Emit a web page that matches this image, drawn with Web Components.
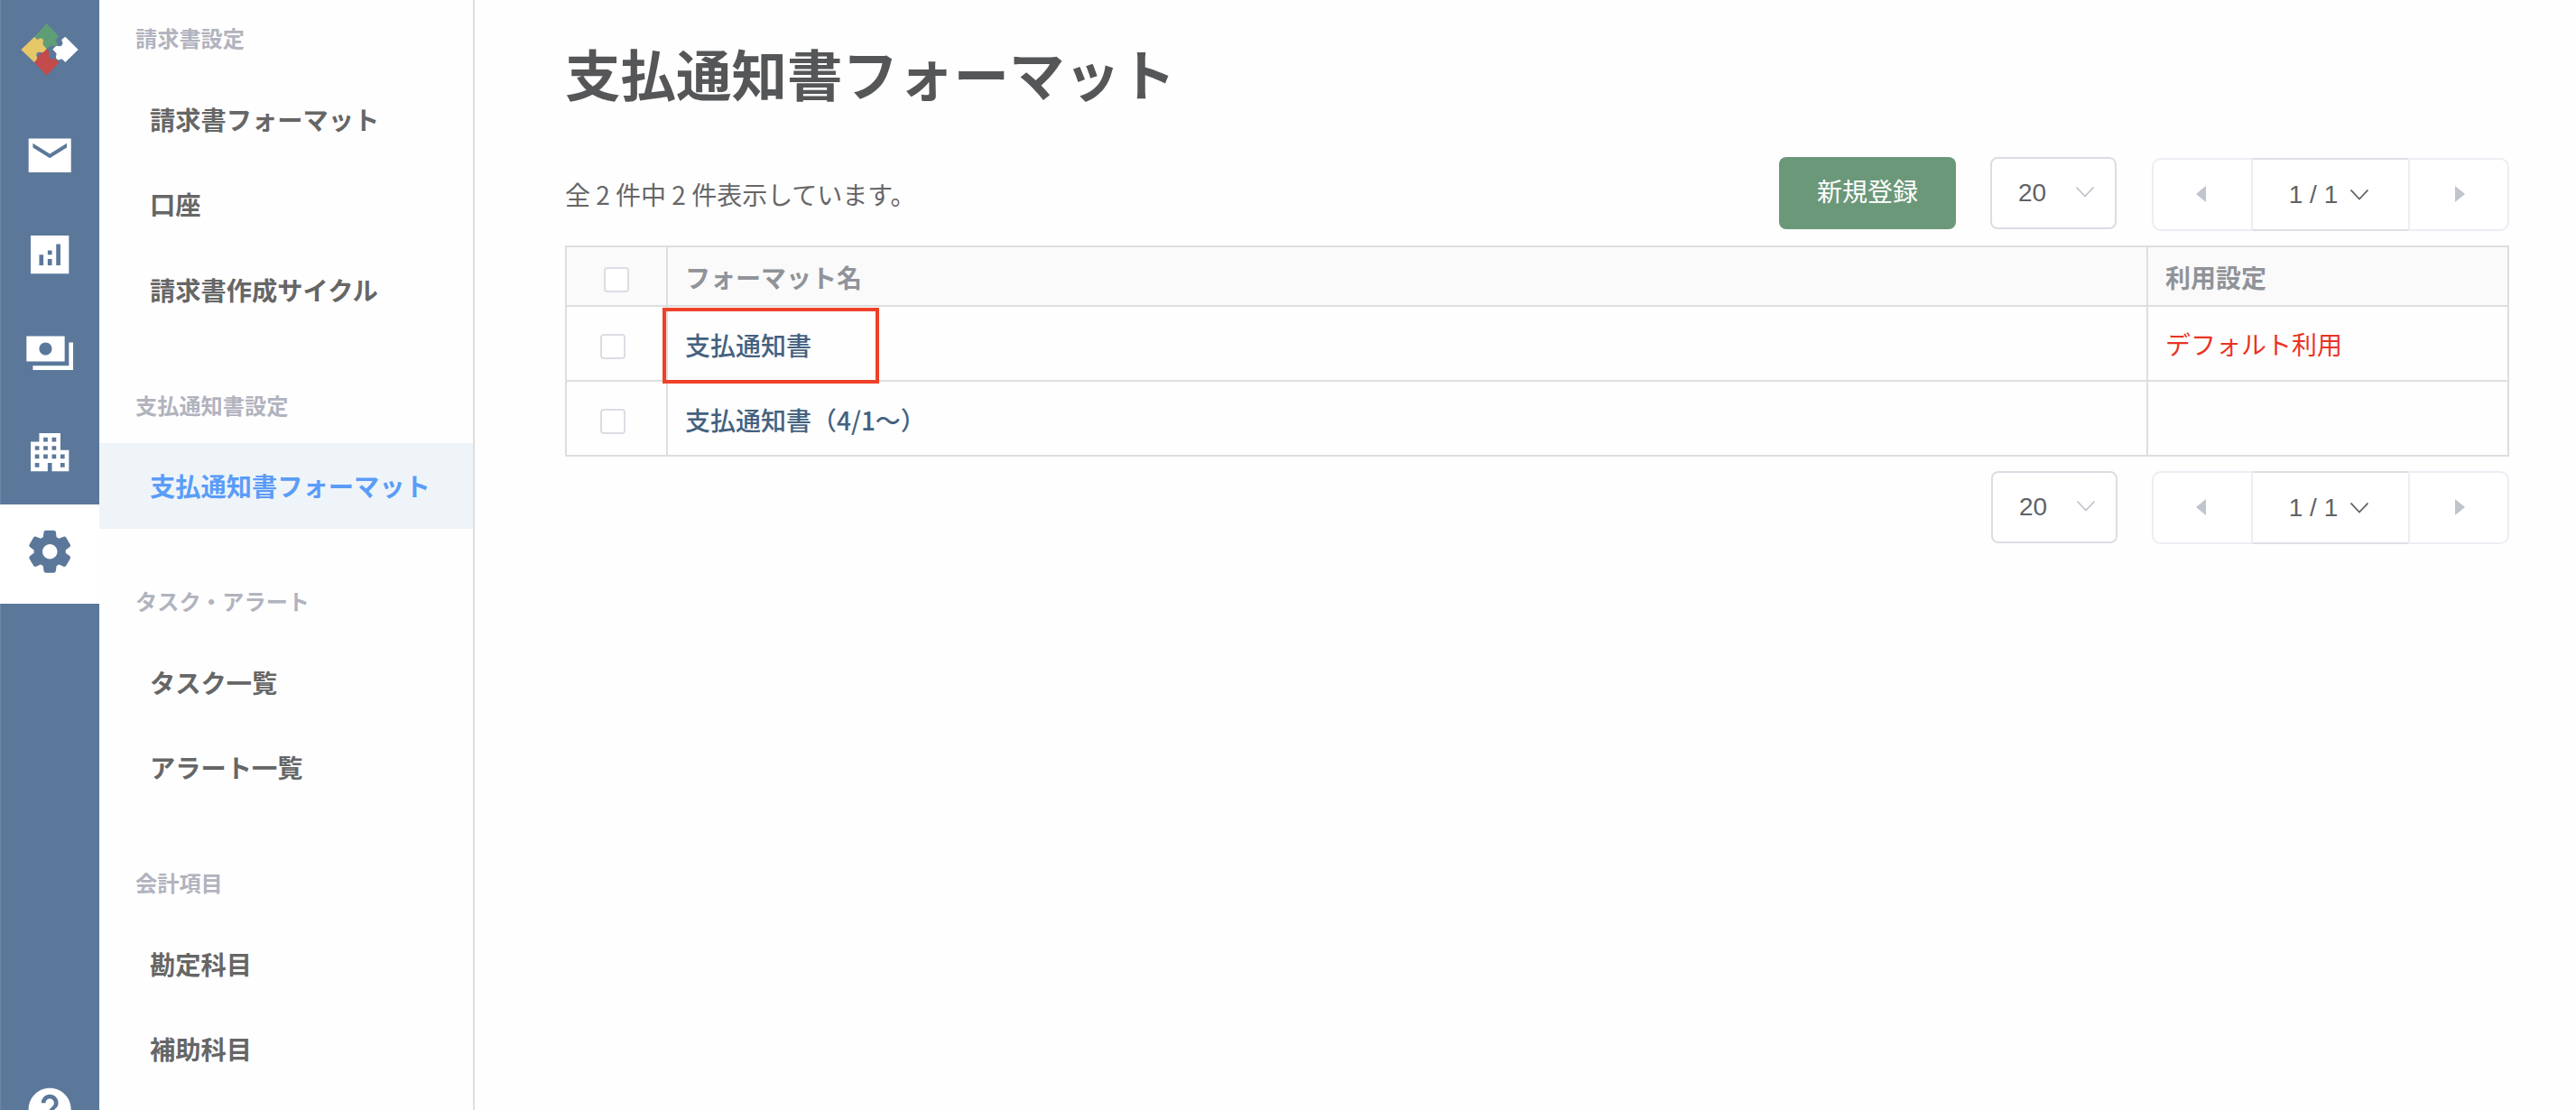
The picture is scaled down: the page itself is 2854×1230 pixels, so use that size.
<!DOCTYPE html>
<html lang="ja">
<head>
<meta charset="utf-8">
<title>支払通知書フォーマット</title>
<style>
    html, body {
        margin: 0;
        height: 100%;
        overflow: hidden;
    }

    body {
        --rail-color: #5b789b;
        --line-color: #dedede;
        --control-border: #dcdde4;
        --text-color: #606266;
        background-color: #fefefe;
        color: #666;
        font-family: "Noto Sans CJK JP", sans-serif;
        font-size: 28px;
    }
</style>
</head>
<body>
<app-shell>
    <icon-rail slot="rail"></icon-rail>

    <side-menu slot="menu">
        <menu-group heading="請求書設定">
            <menu-item>請求書フォーマット</menu-item>
            <menu-item>口座</menu-item>
            <menu-item>請求書作成サイクル</menu-item>
        </menu-group>
        <menu-group heading="支払通知書設定">
            <menu-item active>支払通知書フォーマット</menu-item>
        </menu-group>
        <menu-group heading="タスク・アラート">
            <menu-item>タスク一覧</menu-item>
            <menu-item>アラート一覧</menu-item>
        </menu-group>
        <menu-group heading="会計項目">
            <menu-item>勘定科目</menu-item>
            <menu-item>補助科目</menu-item>
        </menu-group>
    </side-menu>

    <page-title>支払通知書フォーマット</page-title>
    <list-toolbar>
        <span slot="count">全 2 件中 2 件表示しています。</span>
        <primary-button>新規登録</primary-button>
        <size-select>20</size-select>
        <page-pager>1 / 1</page-pager>
    </list-toolbar>
    <format-table>
        <table-row head>
            <span slot="name">フォーマット名</span>
            <span slot="setting">利用設定</span>
        </table-row>
        <table-row marked>
            <span slot="name">支払通知書</span>
            <span slot="setting">デフォルト利用</span>
        </table-row>
        <table-row>
            <span slot="name">支払通知書（4/1〜）</span>
        </table-row>
    </format-table>
    <list-toolbar bottom>
        <size-select>20</size-select>
        <page-pager>1 / 1</page-pager>
    </list-toolbar>
</app-shell>

<script>
const define = (name, html) => {
    const template = document.createElement('template')
    template.innerHTML = html

    customElements.define(name, class extends HTMLElement {
        constructor() {
            super()
            this.attachShadow({ mode: 'open' }).appendChild(template.content.cloneNode(true))
        }

        connectedCallback() {
            const heading = this.shadowRoot.querySelector('[data-heading]')
            if (heading) heading.textContent = this.getAttribute('heading')
        }
    })
}

define('app-shell', `
<style>
    :host {
        display: flex;
        height: 100vh;
        overflow: hidden;
    }

    main {
        flex: 1;
        padding: 0 74px 0 100px;
    }
</style>
<slot name="rail"></slot>
<slot name="menu"></slot>
<main><slot></slot></main>
`)

define('icon-rail', `
<style>
    :host {
        display: flex;
        flex-direction: column;
        box-sizing: border-box;
        flex: none;
        width: 110px;
        height: 100vh;
        overflow: hidden;
        background-color: var(--rail-color);
        box-shadow: inset 1px 0 #6c87a6;
        color: white;
    }

    .logo {
        width: 74px;
        height: 70px;
        margin: 20px 0 30px 18px;
        flex: none;
    }

    a {
        display: flex;
        justify-content: center;
        box-sizing: border-box;
        flex: none;
        height: 109.75px;
        padding-top: 23.8px;
        color: inherit;
    }

    a.active {
        background-color: white;
        color: var(--rail-color);
    }

    a svg {
        width: 56.4px;
        height: 56.4px;
        fill: currentColor;
    }

    a.help {
        margin-top: 508px;
    }
</style>
<svg class="logo" viewBox="0 0 222 210">
    <path fill="#5f9d77" d="M101 18l41 43-7 7c-5 2-6 5-1 10 4 6 2 13-3 16-6 2-11-3-15-2-5 0-8 5-15 11L61 62z"/>
    <path fill="#c34b4b" d="M101 103l9 10c1 5-3 8-1 16 2 7 11 10 17 7 4-3 7 2 16 12l-41 43-41-44 20-28z"/>
    <path fill="#e7c768" d="M61 62l8 9c5 2 8-4 13-4 5 1 9 5 8 11-2 5-4 8 1 13l10 12-9 9c-3 4-7 3-10 2-5-2-11-1-14 4-2 4-1 8 1 12 2 5-1 8-9 17l-44-42z"/>
    <path fill="#fff" d="M163 62l43 43-43 42-8-8c-4-5-8 0-13 0-6 0-11-5-10-11 1-5 4-9-1-13l-10-11 9-9c4-4 8-2 13-1 8 1 14-8 10-16-2-3-3-5 0-8z"/>
</svg>
<a><svg viewBox="0 0 24 24"><path d="M22 4H2v16h20V4zm-2 4.25-8 5-8-5v-2l8 5 8-5v2z"/></svg></a>
<a><svg viewBox="0 0 24 24"><path d="M21 3H3v18h18V3zM9 17H7v-5h2v5zm4 0h-2v-3h2v3zm0-5h-2v-2h2v2zm4 5h-2V7h2v10z"/></svg></a>
<a><svg viewBox="0 0 24 24"><path d="M19 4H1v12h18V4zm-9 9c-1.660 0-3-1.340-3-3s1.340-3 3-3 3 1.340 3 3-1.340 3-3 3zm13-6v13H4v-2h17V7h2z"/></svg></a>
<a><svg viewBox="0 0 24 24"><path d="M17 11V3H7v4H3v14h8v-4h2v4h8V11h-4zM7 19H5v-2h2v2zm0-4H5v-2h2v2zm0-4H5V9h2v2zm4 4H9v-2h2v2zm0-4H9V9h2v2zm0-4H9V5h2v2zm4 8h-2v-2h2v2zm0-4h-2V9h2v2zm0-4h-2V5h2v2zm4 12h-2v-2h2v2zm0-4h-2v-2h2v2z"/></svg></a>
<a class="active"><svg viewBox="0 0 24 24"><path d="M19.500 12c0-.230-.010-.450-.030-.680l1.860-1.410c.400-.300.510-.860.260-1.300l-1.870-3.230a.987.987 0 0 0-1.250-.420l-2.150.910c-.370-.260-.760-.490-1.170-.680l-.290-2.310c-.060-.500-.490-.880-.990-.880h-3.730c-.510 0-.940.380-1 .880l-.290 2.310c-.410.190-.800.420-1.170.680l-2.150-.910c-.460-.200-1-.020-1.250.420L2.410 8.620c-.250.440-.140.990.260 1.290l1.860 1.410a7.343 7.343 0 0 0 0 1.350l-1.860 1.410c-.400.300-.510.860-.260 1.300l1.870 3.230c.250.440.790.620 1.250.420l2.150-.910c.370.260.760.490 1.170.680l.290 2.310c.060.500.490.880.990.880h3.730c.500 0 .930-.380.990-.880l.290-2.310c.410-.190.800-.420 1.170-.680l2.150.910c.460.200 1 .020 1.250-.420l1.870-3.230c.250-.440.140-.990-.260-1.290l-1.860-1.410c.030-.230.040-.450.040-.680zm-7.460 3.500c-1.930 0-3.500-1.570-3.500-3.500s1.570-3.500 3.500-3.500 3.500 1.570 3.500 3.500-1.570 3.500-3.500 3.500z"/></svg></a>
<a class="help"><svg viewBox="0 0 24 24"><path d="M12 2C6.480 2 2 6.480 2 12s4.480 10 10 10 10-4.480 10-10S17.520 2 12 2zm1 17h-2v-2h2v2zm2.070-7.750-.900.920C13.450 12.900 13 13.500 13 15h-2v-.500c0-1.100.450-2.100 1.170-2.830l1.240-1.260c.370-.360.590-.860.590-1.410 0-1.100-.900-2-2-2s-2 .900-2 2H8c0-2.210 1.790-4 4-4s4 1.790 4 4c0 .880-.360 1.680-.930 2.250z"/></svg></a>
`)

define('side-menu', `
<style>
    :host {
        display: flex;
        flex-direction: column;
        gap: 38.5px;
        box-sizing: border-box;
        flex: none;
        width: 416px;
        height: 100vh;
        overflow: hidden;
        border-right: 2px solid var(--line-color);
        font-weight: 700;
    }
</style>
<slot></slot>
`)

define('menu-group', `
<style>
    :host {
        display: block;
        flex: none;
    }

    h2 {
        margin: 0;
        padding-left: 40px;
        height: 84.5px;
        line-height: 83px;
        font-size: 24.2px;
        color: #b1b3be;
    }
</style>
<h2 data-heading></h2>
<slot></slot>
`)

define('menu-item', `
<style>
    :host {
        display: block;
        height: 94.5px;
        line-height: 94px;
        padding-left: 56px;
        font-size: 28.25px;
        white-space: nowrap;
    }

    :host([active]) {
        background-color: #eff4f9;
        color: #5a9cf8;
    }
</style>
<slot></slot>
`)

define('page-title', `
<style>
    :host {
        display: block;
    }

    h1 {
        margin: 0;
        height: 166px;
        line-height: 162px;
        font-size: 61.5px;
        font-weight: 700;
        color: #555658;
    }
</style>
<h1><slot></slot></h1>
`)

define('list-toolbar', `
<style>
    :host {
        display: flex;
        align-items: flex-start;
        justify-content: flex-end;
        height: 98px;
        padding-top: 8px;
    }

    :host([bottom]) {
        padding-top: 16px;
        --select-gap: 38px;
        --pager-shift: 0px;
    }

    ::slotted([slot="count"]) {
        flex: 1;
        line-height: 82px;
    }
</style>
<slot name="count"></slot>
<slot></slot>
`)

define('primary-button', `
<style>
    :host {
        display: block;
        width: 196px;
        height: 80px;
        margin-right: 38px;
        border-radius: 8px;
        background-color: #6c987a;
        color: white;
        line-height: 75px;
        text-align: center;
    }
</style>
<slot></slot>
`)

define('size-select', `
<style>
    :host {
        display: flex;
        align-items: center;
        justify-content: space-between;
        box-sizing: border-box;
        width: 140px;
        height: 80px;
        padding: 0 23px 0 29px;
        margin-right: var(--select-gap, 39px);
        border: 2px solid var(--control-border);
        border-radius: 8px;
        background-color: white;
        color: var(--text-color);
        font-family: "Liberation Sans", sans-serif;
    }

    svg {
        width: 20px;
        height: 12px;
        margin-bottom: 2px;
        fill: none;
        stroke: #c0c4cc;
        stroke-width: 1.6;
    }
</style>
<slot></slot>
<svg viewBox="0 0 20 12"><path d="M.5 .5 10 10.500 19.500 .5"/></svg>
`)

define('page-pager', `
<style>
    :host {
        display: flex;
        box-sizing: border-box;
        width: 396px;
        height: 81px;
        margin-top: var(--pager-shift, 1px);
        color: var(--text-color);
        font-family: "Liberation Sans", sans-serif;
    }

    div {
        display: flex;
        align-items: center;
        justify-content: center;
        box-sizing: border-box;
        border: 2px solid #ecedf4;
        background-color: white;
    }

    .prev {
        width: 112px;
        border-radius: 10px 0 0 10px;
    }

    .current {
        gap: 14px;
        width: 172px;
        padding-right: 4px;
        border-color: #dedfe4;
        border-width: 2px 0;
    }

    .next {
        width: 112px;
        border-radius: 0 10px 10px 0;
    }

    .prev svg, .next svg {
        width: 11px;
        height: 18px;
        margin: 0 3px 2px 0;
        fill: #c0c4cc;
    }

    .next svg {
        margin: 0 0 2px 3px;
    }

    .current svg {
        width: 20px;
        height: 12px;
        fill: none;
        stroke: var(--text-color);
        stroke-width: 1.8;
    }
</style>
<div class="prev"><svg viewBox="0 0 11 18"><path d="M11 0v18L0 9z"/></svg></div>
<div class="current"><slot></slot><svg viewBox="0 0 20 12"><path d="M.5 .5 10 10.500 19.500 .5"/></svg></div>
<div class="next"><svg viewBox="0 0 11 18"><path d="M0 0v18L11 9z"/></svg></div>
`)

define('format-table', `
<style>
    :host {
        display: block;
        border: 2px solid var(--line-color);
        border-width: 2px 0 0 2px;
    }
</style>
<slot></slot>
`)

define('table-row', `
<style>
    :host {
        display: grid;
        grid-template-columns: 112px 1fr 400px;
        grid-template-rows: 100%;
        height: 83px;
        line-height: 75px;
        color: #44617f;
        font-weight: 500;
    }

    :host([head]) {
        height: 66px;
        line-height: 60px;
        background-color: #fafafa;
        color: #909399;
        font-weight: 700;
    }

    .cell {
        position: relative;
        box-sizing: border-box;
        padding: 5px 0 0 19px;
        border: 2px solid var(--line-color);
        border-width: 0 2px 2px 0;
    }

    .check {
        padding: 30px 0 0 37px;
    }

    .check i {
        display: block;
        box-sizing: border-box;
        width: 28px;
        height: 28px;
        border: 2px solid var(--control-border);
        border-radius: 4px;
        background-color: white;
    }

    .setting {
        padding-top: 4px;
        color: #eb3323;
        font-weight: 400;
    }

    :host([head]) .cell {
        padding-top: 3px;
    }

    :host([head]) .check {
        padding: 22px 0 0 41px;
    }

    :host([head]) .setting {
        color: inherit;
        font-weight: inherit;
    }

    .mark {
        display: none;
    }

    /* frame drawn over the cell lines */
    :host([marked]) .mark {
        display: block;
        position: absolute;
        top: 1px;
        left: -6px;
        z-index: 1;
        box-sizing: border-box;
        width: 240px;
        height: 84px;
        border: 4px solid #ee4128;
    }
</style>
<div class="cell check"><i></i></div>
<div class="cell"><slot name="name"></slot><span class="mark"></span></div>
<div class="cell setting"><slot name="setting"></slot></div>
`)
</script>
</body>
</html>
